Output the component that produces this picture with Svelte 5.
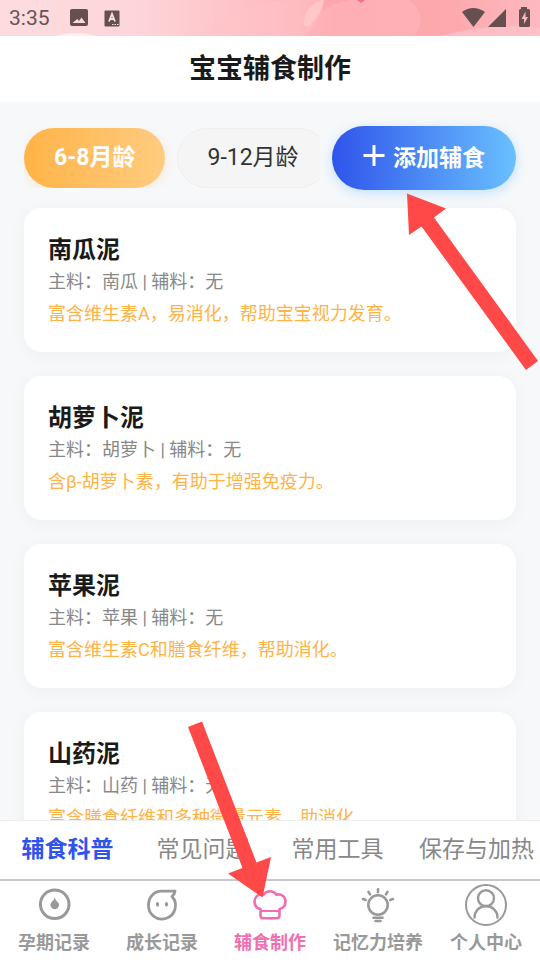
<script>
  const foods = [
    { name: '南瓜泥', main: '南瓜', extra: '无', note: '富含维生素A，易消化，帮助宝宝视力发育。' },
    { name: '胡萝卜泥', main: '胡萝卜', extra: '无', note: '含β-胡萝卜素，有助于增强免疫力。' },
    { name: '苹果泥', main: '苹果', extra: '无', note: '富含维生素C和膳食纤维，帮助消化。' },
    { name: '山药泥', main: '山药', extra: '无', note: '富含膳食纤维和多种微量元素，助消化。' }
  ];
  const ages = ['6-8月龄', '9-12月龄'];
  const topics = ['辅食科普', '常见问题', '常用工具', '保存与加热'];
  const pages = [
    { label: '孕期记录', icon: 'drop' },
    { label: '成长记录', icon: 'baby' },
    { label: '辅食制作', icon: 'chef' },
    { label: '记忆力培养', icon: 'bulb' },
    { label: '个人中心', icon: 'user' }
  ];
  let age = $state(0);
  let topic = $state(0);
  let page = $state(2);
</script>

<div class="app">
  <div class="status">
    <svg class="petals" viewBox="0 0 540 36" preserveAspectRatio="none" aria-hidden="true">
      <defs>
        <linearGradient id="sky" x1="0" x2="1" y1="0" y2="0">
          <stop offset="0" stop-color="#fddcdf" />
          <stop offset=".25" stop-color="#fdd6d9" />
          <stop offset=".5" stop-color="#febcc2" />
          <stop offset=".62" stop-color="#fda5aa" />
          <stop offset=".84" stop-color="#fda9ae" />
          <stop offset="1" stop-color="#fdb9c0" />
        </linearGradient>
      </defs>
      <rect width="540" height="36" fill="url(#sky)" />
      <path d="M200 36Q230 4 290 0H324Q322 20 306 36Z" fill="#ffc3c8" opacity=".5" />
      <path d="M304 20Q308 4 322 0H324Q322 14 309 27Q302 26 304 20Z" fill="#ffd0d2" opacity=".6" />
      <path d="M306 36Q316 4 350 0H408Q430 14 414 36Z" fill="#ffb5bc" opacity=".6" />
      <path d="M440 36Q490 22 540 28V36Z" fill="#ffc6cf" opacity=".6" />
      <path d="M357 0h8l-4 3z" fill="#f76f87" />
      <ellipse cx="76" cy="41" rx="24" ry="8" fill="#fff0ec" />
    </svg>
    <div class="side">
      <span class="time">3:35</span>
      <svg class="pic" viewBox="0 0 18 18" width="18" height="18" aria-hidden="true">
        <path fill-rule="evenodd" d="M2 0h14a2 2 0 0 1 2 2v13a2 2 0 0 1-2 2H2a2 2 0 0 1-2-2V2a2 2 0 0 1 2-2ZM2.500 14h13l-4-5.500-2.500 3.500-1.500-2-1.500 1-3.500 3Z" />
      </svg>
      <svg viewBox="0 0 16 17" width="16" height="17" aria-hidden="true">
        <rect x="0.500" y="0.500" width="15" height="16" rx="1" />
        <path d="M5 11.500 8 4l3 7.500M6 9h4" fill="none" stroke="#fde0e2" stroke-width="1.800" />
        <path d="M8 14.500h1.500m1 0H12m1 0h1.500" stroke="#fde0e2" stroke-width="1.200" />
      </svg>
    </div>
    <svg class="signals" viewBox="0 0 68 22" width="68" height="22" aria-hidden="true">
      <path d="M0 5Q11-3 23 5L11.500 20Z" />
      <path d="M26 20 44 2V20Z" />
      <path fill-rule="evenodd" d="M59 0h6v2h1.500q1.500 0 1.500 1.500V18.500q0 1.500-1.500 1.500h-8q-1.500 0-1.500-1.500V3.500Q57 2 58.500 2H59ZM63.500 4.500 59.500 12h2.500v5L66 10h-2.500Z" />
    </svg>
  </div>

  <header><h1>宝宝辅食制作</h1></header>

  <main>
    <div class="filters">
      <div class="ages">
        {#each ages as a, i}
          <button class="age" class:active={age === i} onclick={() => (age = i)}>{a}</button>
        {/each}
      </div>
      <button class="add">
        <svg viewBox="0 0 22 22" width="22" height="22" aria-hidden="true">
          <path d="M11 0v21M0.500 10.500h21" stroke="#fff" stroke-width="3" />
        </svg>
        添加辅食
      </button>
    </div>

    <div class="foods">
      {#each foods as f}
        <article>
          <h2>{f.name}</h2>
          <p class="meta">主料：{f.main} | 辅料：{f.extra}</p>
          <p class="note">{f.note}</p>
        </article>
      {/each}
    </div>
  </main>

  <nav class="topics">
    {#each topics as t, i}
      <button class:active={topic === i} onclick={() => (topic = i)}>{t}</button>
    {/each}
  </nav>

  <nav class="pages">
    {#each pages as p, i}
      <button class:active={page === i} onclick={() => (page = i)}>
        <svg viewBox="0 0 44 44" width="44" height="44" fill="none" stroke="currentColor" stroke-width="3" stroke-linecap="round" stroke-linejoin="round" aria-hidden="true">
          {#if p.icon === 'drop'}
            <circle cx="22.700" cy="22.300" r="14.300" />
            <path d="M22.700 15.300q.6 3.200 2.900 4.800a4.100 4.100 0 1 1-5.800 0q2.300-1.600 2.900-4.800Z" fill="currentColor" stroke="none" />
          {:else if p.icon === 'baby'}
            <path d="M35 9.200H21.500C14 9.200 8.500 15.300 8.500 22.700A13.500 13.500 0 1 0 32 14.500Q34.500 12.500 35 9.200Z" stroke-width="2.800" />
            <path d="M17.500 21.500v1.500M26.500 21.500v1.500" />
          {:else if p.icon === 'chef'}
            <path d="M12.500 27C8.500 26 6.500 23 6.500 19.500C6.500 14.500 11 11.500 15.500 12.700C17 10.500 19 9.200 22 9.200S27 10.500 28.500 12.700C33 11.500 37.500 14.500 37.500 19.500C37.500 23 35.500 26 31.500 27V33.500a2.700 2.700 0 0 1-2.700 2.700H15.200a2.700 2.700 0 0 1-2.700-2.700Z" stroke-width="2.600" />
            <path d="M13 29h18.500" stroke-width="2" />
          {:else if p.icon === 'bulb'}
            <circle cx="22" cy="23" r="9.700" stroke-width="2.600" />
            <path d="M22 7.300v3M12.500 9.800l1.500 2.500M31.500 9.800 30 12.300M7 17l2.700 1M37 17l-2.700 1M17.500 35.700h9M19.500 39h5" stroke-width="2.600" />
          {:else}
            <circle cx="22" cy="23" r="20" stroke-width="2" />
            <circle cx="22" cy="16.300" r="8" stroke-width="2.400" />
            <path d="M10.500 35.500a11.500 11.500 0 0 1 23 0" stroke-width="2.400" />
          {/if}
        </svg>
        <span>{p.label}</span>
      </button>
    {/each}
  </nav>

  <svg class="pointer" viewBox="0 0 540 960" aria-hidden="true">
    <path d="M407 193.500 446 208.500 434 217.500 538 361 526 370 421.500 226.500 409 235Z" />
    <path d="M188 727 202 721.500 256.500 862.500 271 857 262.500 897.500 228 873.500 242.500 868Z" />
  </svg>
</div>

<style>
  :global(body) {
    margin: 0;
  }
  .app {
    position: relative;
    display: flex;
    flex-direction: column;
    height: 100vh;
    overflow: hidden;
    background: #f7f8fa;
    font-family: Roboto, 'Noto Sans CJK SC', sans-serif;
    color: #1a1a1a;
  }
  button {
    border: 0;
    margin: 0;
    padding: 0;
    background: none;
    font: inherit;
    color: inherit;
    white-space: nowrap;
    cursor: pointer;
  }
  h1, h2, p {
    margin: 0;
  }
  .status {
    position: relative;
    display: flex;
    align-items: center;
    justify-content: space-between;
    height: 36px;
    flex: none;
    padding: 0 10px 0 9px;
    fill: #65504f;
    color: #65555a;
  }
  .petals {
    position: absolute;
    inset: 0;
    width: 100%;
    height: 100%;
  }
  .side {
    position: relative;
    display: flex;
    align-items: center;
  }
  .time {
    font-size: 21px;
    line-height: 36px;
  }
  .pic {
    margin: 0 16px 0 20px;
  }
  .signals {
    position: relative;
    margin-bottom: 1px;
  }
  header {
    flex: none;
    background: #fff;
    text-align: center;
  }
  h1 {
    font-size: 27px;
    line-height: 66px;
    font-weight: 700;
  }
  main {
    flex: 1;
    min-height: 0;
    overflow-y: auto;
    scrollbar-width: none;
    padding: 24px 24px 0;
  }
  .filters {
    display: flex;
    align-items: center;
    gap: 12px;
    margin-bottom: 18px;
  }
  .ages {
    display: flex;
    flex: 1;
    min-width: 0;
    gap: 12px;
    overflow: hidden;
  }
  .age {
    flex: none;
    height: 60px;
    padding: 0 29px 6px;
    border: 1px solid #eee;
    border-radius: 30px;
    background: #f5f5f5;
    color: #333;
    font-size: 23px;
  }
  .age.active {
    border-color: transparent;
    background: linear-gradient(90deg, #ffb347, #ffcc80) border-box;
    box-shadow: 0 3px 12px rgba(255, 179, 71, 0.2);
    color: #fff;
    font-weight: 700;
  }
  .add {
    display: flex;
    align-items: center;
    justify-content: center;
    gap: 8px;
    flex: none;
    height: 64px;
    padding: 0 31px 4px;
    border-radius: 32px;
    background: linear-gradient(90deg, #2f54eb, #69c0ff);
    box-shadow: 0 3px 12px rgba(105, 192, 255, 0.4);
    color: #fff;
    font-size: 23px;
    font-weight: 700;
  }
  .foods {
    display: flex;
    flex-direction: column;
    gap: 24px;
    padding-bottom: 24px;
  }
  article {
    padding: 24px;
    border-radius: 18px;
    background: #fff;
    box-shadow: 0 3px 18px rgba(0, 0, 0, 0.04);
  }
  h2 {
    font-size: 24px;
    line-height: 36px;
    font-weight: 700;
  }
  .meta,
  .note {
    font-size: 18px;
    line-height: 28px;
  }
  .meta {
    margin-bottom: 4px;
    color: #888;
  }
  .note {
    color: #ffb347;
  }
  .topics {
    display: grid;
    grid-template-columns: repeat(4, 1fr);
    flex: none;
    border-top: 1px solid #eee;
    background: #fff;
    color: #888;
    font-size: 23px;
  }
  .topics button {
    height: 58px;
    padding-bottom: 6px;
  }
  .topics button:last-child {
    text-align: right;
    padding-right: 6px;
  }
  .topics .active {
    color: #2f54eb;
    font-weight: 700;
  }
  .pages {
    display: grid;
    grid-template-columns: repeat(5, 1fr);
    flex: none;
    border-top: 2px solid #c8c8c8;
    background: #fff;
    color: #999;
    font-size: 18px;
    font-weight: 700;
  }
  .pages button {
    display: flex;
    flex-direction: column;
    align-items: center;
    gap: 2px;
    padding: 1px 0 3px;
  }
  .pages span {
    line-height: 29px;
  }
  .pages .active {
    color: #f26eb0;
  }
  .pointer {
    position: absolute;
    top: 0;
    left: 0;
    width: 100%;
    fill: #ff4848;
    pointer-events: none;
  }
</style>
